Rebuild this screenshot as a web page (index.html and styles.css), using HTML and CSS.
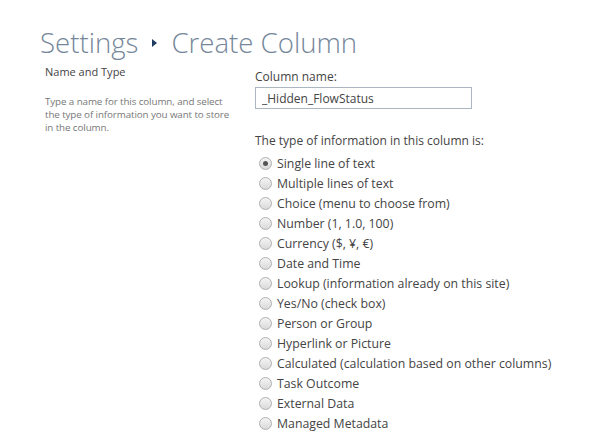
FILE: index.html
```html
<!DOCTYPE html>
<html>
<head>
<meta charset="utf-8">
<link rel="stylesheet" href="styles.css">
</head>
<body>
<div class="page">
  <h1 class="title">
    <span>Settings</span>
    <span class="sep"></span>
    <span>Create Column</span>
  </h1>
  <div class="section">
    <div class="left">
      <div class="sec-title">Name and Type</div>
      <div class="sec-desc">Type a name for this column, and select the type of information you want to store in the column.</div>
    </div>
    <div class="right">
      <div class="label">Column name:</div>
      <input class="name-input" type="text" value="_Hidden_FlowStatus">
      <div class="label type-label">The type of information in this column is:</div>
      <div class="options">
        <label class="opt"><span class="radio checked"></span>Single line of text</label>
        <label class="opt"><span class="radio"></span>Multiple lines of text</label>
        <label class="opt"><span class="radio"></span>Choice (menu to choose from)</label>
        <label class="opt"><span class="radio"></span>Number (1, 1.0, 100)</label>
        <label class="opt"><span class="radio"></span>Currency ($, ¥, €)</label>
        <label class="opt"><span class="radio"></span>Date and Time</label>
        <label class="opt"><span class="radio"></span>Lookup (information already on this site)</label>
        <label class="opt"><span class="radio"></span>Yes/No (check box)</label>
        <label class="opt"><span class="radio"></span>Person or Group</label>
        <label class="opt"><span class="radio"></span>Hyperlink or Picture</label>
        <label class="opt"><span class="radio"></span>Calculated (calculation based on other columns)</label>
        <label class="opt"><span class="radio"></span>Task Outcome</label>
        <label class="opt"><span class="radio"></span>External Data</label>
        <label class="opt"><span class="radio"></span>Managed Metadata</label>
      </div>
    </div>
  </div>
</div>
</body>
</html>
```
FILE: styles.css
```css
html, body {
  margin: 0;
  padding: 0;
  background: #ffffff;
}
body {
  font-family: "Open Sans", "Noto Sans", sans-serif;
  color: #444444;
}
.page {
  padding: 24px 0 0 40px;
}
.title {
  margin: 0;
  font-weight: 300;
  font-size: 27.6px;
  line-height: 36px;
  color: #75879a;
  display: flex;
  align-items: center;
  gap: 14px;
}
.sep {
  width: 0;
  height: 0;
  border-top: 4px solid transparent;
  border-bottom: 4px solid transparent;
  border-left: 5px solid #1f3b5e;
  margin-top: 2px;
}
.section {
  display: flex;
  margin-top: 4px;
}
.left {
  width: 210px;
  padding-left: 5px;
}
.sec-title {
  font-size: 11px;
  line-height: 16px;
  color: #444;
}
.sec-desc {
  margin-top: 15px;
  font-size: 9.8px;
  letter-spacing: -0.1px;
  line-height: 13px;
  color: #777777;
  width: 186px;
}
.right {
  flex: 1;
}
.label {
  font-size: 12px;
  line-height: 18px;
  color: #444;
  margin-top: 4px;
}
.name-input {
  display: block;
  box-sizing: border-box;
  width: 217px;
  height: 22px;
  margin: 1px 0 0 0;
  padding: 0 6px;
  border: 1px solid #abb6c1;
  font-family: inherit;
  font-size: 12px;
  color: #444;
  outline: none;
}
.type-label {
  margin-top: 23px;
}
.options {
  margin-top: 3px;
  display: flex;
  flex-direction: column;
}
.opt {
  display: flex;
  align-items: center;
  height: 20px;
  font-size: 12.3px;
  color: #444;
}
.radio {
  box-sizing: border-box;
  width: 13px;
  height: 13px;
  border-radius: 50%;
  border: 1px solid #b0b0b0;
  background: linear-gradient(#f4f4f4, #dadada);
  margin: 0 5px 0 4px;
  position: relative;
}
.radio.checked::after {
  content: "";
  position: absolute;
  left: 3px;
  top: 3px;
  width: 5px;
  height: 5px;
  border-radius: 50%;
  background: #555;
}
```
